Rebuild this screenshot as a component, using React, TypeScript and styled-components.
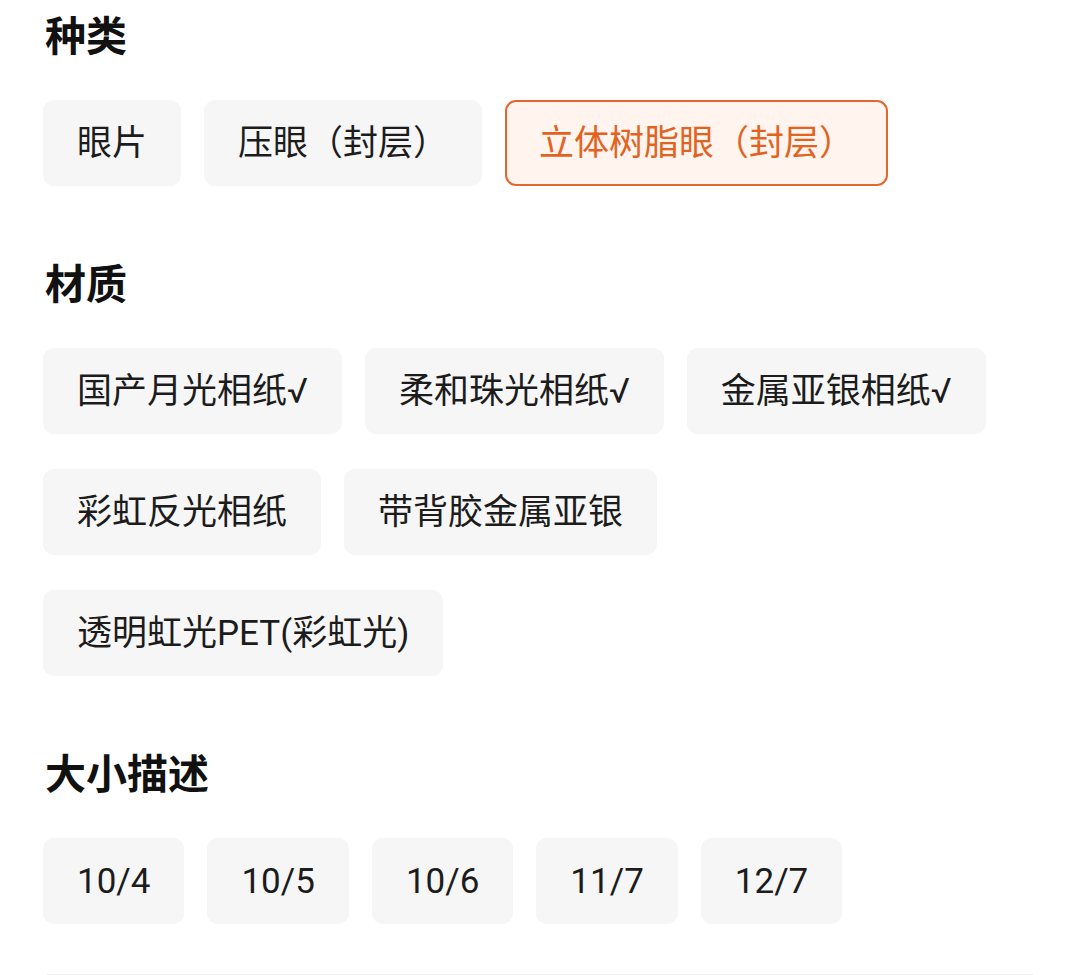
import React, { useState } from 'react';
import styled, { createGlobalStyle } from 'styled-components';

const GlobalStyle = createGlobalStyle`
  html, body {
    margin: 0;
    padding: 0;
    background: #ffffff;
  }
  body {
    font-family: Roboto, "Noto Sans CJK SC", "Noto Sans", sans-serif;
  }
`;

const Page = styled.div`
  width: 1080px;
  height: 975px;
  box-sizing: border-box;
  padding: 13px 46px 0 43px;
  overflow: hidden;
`;

const Section = styled.section`
  & + & {
    margin-top: 75px;
  }
`;

const Title = styled.h2`
  margin: 0 0 39px 2px;
  font-size: 41px;
  line-height: 48px;
  font-weight: 700;
  color: #111111;
`;

const ChipList = styled.div`
  display: flex;
  flex-wrap: wrap;
  gap: 35px 23px;
`;

const Chip = styled.button<{ $active?: boolean }>`
  height: 86px;
  box-sizing: border-box;
  padding: 0 32px;
  border-radius: 11px;
  border: 2px solid ${(p) => (p.$active ? '#e3672d' : 'transparent')};
  background: ${(p) => (p.$active ? '#fff4ee' : '#f6f6f6')};
  color: ${(p) => (p.$active ? '#e2621f' : '#1c1c1c')};
  font-family: Roboto, "Noto Sans CJK SC", sans-serif;
  font-size: 35px;
  line-height: 1;
  display: flex;
  align-items: center;
  cursor: pointer;
  white-space: nowrap;
`;

const Divider = styled.div`
  margin: 50px 0 0 3px;
  height: 2px;
  background: #f1f1f1;
`;

const groups = [
  { title: '种类', items: ['眼片', '压眼（封层）', '立体树脂眼（封层）'], active: 2 },
  {
    title: '材质',
    items: ['国产月光相纸√', '柔和珠光相纸√', '金属亚银相纸√', '彩虹反光相纸', '带背胶金属亚银', '透明虹光PET(彩虹光)'],
    active: -1,
  },
  { title: '大小描述', items: ['10/4', '10/5', '10/6', '11/7', '12/7'], active: -1 },
];

export default function App() {
  const [selected, setSelected] = useState(groups.map((g) => g.active));

  const pick = (gi: number, ii: number) => {
    setSelected((s) => s.map((v, i) => (i === gi ? ii : v)));
  };

  return (
    <>
      <GlobalStyle />
      <Page>
        {groups.map((g, gi) => (
          <Section key={g.title}>
            <Title>{g.title}</Title>
            <ChipList>
              {g.items.map((item, ii) => (
                <Chip key={item} $active={selected[gi] === ii} onClick={() => pick(gi, ii)}>
                  {item}
                </Chip>
              ))}
            </ChipList>
          </Section>
        ))}
        <Divider />
      </Page>
    </>
  );
}
